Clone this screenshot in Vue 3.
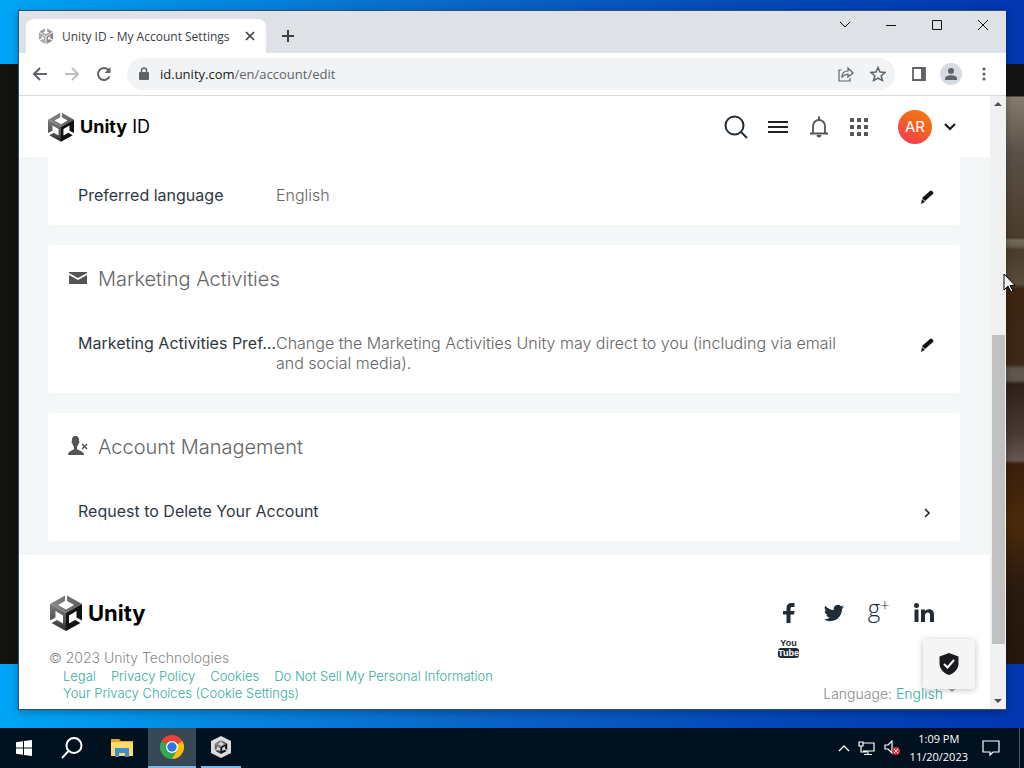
<script setup>
import { ref } from 'vue'

const address = ref('id.unity.com/en/account/edit')

const legalLinks = [
  { id: 'legal', name: 'Legal' },
  { id: 'privacy', name: 'Privacy Policy' },
  { id: 'cookies', name: 'Cookies' },
  { id: 'do-not-sell', name: 'Do Not Sell My Personal Information' },
  { id: 'choices', name: 'Your Privacy Choices (Cookie Settings)' }
]

const dots = [0, 7, 14]
</script>

<template>
  <!-- shared shapes -->
  <svg class="defs" width="0" height="0" aria-hidden="true">
    <defs>
      <linearGradient id="cube-left" x1="0" y1="0" x2="0" y2="1">
        <stop offset="0" stop-color="#7a7a7a" />
        <stop offset="0.6" stop-color="#555" />
        <stop offset="1" stop-color="#262626" />
      </linearGradient>
      <linearGradient id="cube-top" x1="0" y1="0" x2="1" y2="0">
        <stop offset="0" stop-color="#8a8a8a" />
        <stop offset="1" stop-color="#5c5c5c" />
      </linearGradient>
      <symbol id="cube" viewBox="0 0 64 72">
        <path fill="url(#cube-top)" d="M30 1v11L16 20l16 9 16-9-14-8V1l30 17-32 18L0 18z" />
        <path fill="url(#cube-left)" d="M0 18l32 18v36L3 56l11-6 12 7V41L11 32v13L0 51z" />
        <path d="M64 18L32 36v36l29-16-11-6-12 7V41l15-9v13l11 6z" />
      </symbol>
      <symbol id="cube-gray" viewBox="0 0 64 72">
        <path fill="#999" d="M27 2v13l-9 5 14 8 14-8-9-5V2l25 15-30 19L2 17z" />
        <path fill="#aaa" d="M0 20l30 18v34L4 57l12-7 7 4V43L13 36v10L0 53z" />
        <path fill="#8a8a8a" d="M64 20L34 38v34l26-15-12-7-7 4V43l10-7v10l13 7z" />
      </symbol>
      <symbol id="pencil" viewBox="0 0 14 14">
        <path d="M10 1q1-1 2 0l1 1q1 1 0 2L5 11 2 8zM2 9l3 3-4 2z" />
      </symbol>
    </defs>
  </svg>

  <div class="desktop">
    <div class="back-window left"></div>
    <div class="back-window right"></div>

    <div class="browser">
      <div class="tab-strip">
        <div class="tab">
          <svg class="favicon" width="16" height="16"><use href="#cube-gray" /></svg>
          <span class="tab-title">Unity ID - My Account Settings</span>
          <button aria-label="Close tab">
            <svg width="10" height="10" stroke="#3c4043" stroke-width="1.7"><path d="M1 1l8 8M9 1L1 9" /></svg>
          </button>
        </div>
        <button class="new-tab" aria-label="New tab">
          <svg width="14" height="14" stroke="#3c4043" stroke-width="2"><path d="M7 1v12M1 7h12" /></svg>
        </button>
        <div class="window-controls">
          <button aria-label="Search tabs"><svg width="12" height="12"><path d="M1 3l5 5 5-5" /></svg></button>
          <button aria-label="Minimize"><svg width="12" height="12"><path d="M1 6.500h10" /></svg></button>
          <button aria-label="Maximize"><svg width="12" height="12"><path d="M1.500 1.500h9v9h-9z" /></svg></button>
          <button aria-label="Close"><svg width="12" height="12"><path d="M1 1l10 10M11 1L1 11" /></svg></button>
        </div>
      </div>

      <div class="toolbar">
        <button aria-label="Back">
          <svg width="16" height="16" stroke="#5f6368" stroke-width="2"><path d="M15 8H2M8 2L2 8l6 6" /></svg>
        </button>
        <button aria-label="Forward">
          <svg width="16" height="16" stroke="#bcbec1" stroke-width="2"><path d="M1 8h13M8 2l6 6-6 6" /></svg>
        </button>
        <button aria-label="Reload">
          <svg width="16" height="16" stroke="#5f6368" stroke-width="2"><path d="M13.500 10.500A6 6 0 1 1 12.500 4" /><path d="M14.500 1v6h-6z" fill="#5f6368" stroke="none" /></svg>
        </button>
        <div class="omnibox">
          <svg width="10" height="14" class="lock">
            <rect x="0" y="5" width="10" height="8" rx="1" fill="#5f6368" />
            <path d="M2.500 5V3.500a2.500 2.500 0 0 1 5 0V5" stroke="#5f6368" stroke-width="1.500" />
          </svg>
          <label class="url">
            <span class="url-shown" aria-hidden="true"><b>id.unity.com</b>/en/account/edit</span>
            <input v-model="address" aria-label="Address" />
          </label>
          <button aria-label="Share">
            <svg width="16" height="16" stroke="#5f6368" stroke-width="1.200"><path d="M3.500 4H1v11h11v-3M4 11c0-4 2-6 6-6V2l5 5-5 4V8c-3 0-4 1-6 3z" /></svg>
          </button>
          <button aria-label="Bookmark">
            <svg width="16" height="16" stroke="#5f6368" stroke-width="1.500"><path d="M8 1.500l2 4.500 5 .5-3.800 3.200 1.200 4.800L8 12l-4.400 2.500 1.200-4.800L1 6.500 6 6z" /></svg>
          </button>
        </div>
        <button aria-label="Side panel">
          <svg width="16" height="16"><path d="M2 2h12v12H2z" stroke="#5f6368" stroke-width="1.800" /><path d="M10 2h4v12h-4z" fill="#5f6368" /></svg>
        </button>
        <button class="profile" aria-label="Profile">
          <svg width="14" height="14" fill="#5f6368"><circle cx="7" cy="4" r="3" /><path d="M1 13v-1.500C1 9 5 8.300 7 8.300s6 .7 6 3.200V13z" /></svg>
        </button>
        <button aria-label="Menu">
          <svg width="4" height="14" fill="#5f6368"><circle cx="2" cy="2" r="1.600" /><circle cx="2" cy="7" r="1.600" /><circle cx="2" cy="12" r="1.600" /></svg>
        </button>
      </div>

      <div class="viewport">
        <div class="page">
          <header>
            <a class="brand" href="#id">
              <svg width="26" height="30"><use href="#cube" /></svg>
              <span><b>Unity</b> ID</span>
            </a>
            <nav>
              <button aria-label="Search">
                <svg width="24" height="24" stroke="#222c37" stroke-width="2"><circle cx="10.500" cy="10.500" r="9" /><path d="M17 17l6 6" /></svg>
              </button>
              <button aria-label="Menu">
                <svg width="20" height="12" stroke="#222" stroke-width="2"><path d="M0 1h20M0 6h20M0 11h20" /></svg>
              </button>
              <button class="bell" aria-label="Notifications">
                <svg width="18" height="22" stroke="#555" stroke-width="1.800"><path d="M3 16.500V10a6 6 0 0 1 12 0v6.500M0 17.500h18" /><path d="M6.500 19h5q-.5 2.500-2.500 2.500T6.500 19zM8 1.500q0-1.500 1-1.500t1 1.500V4H8z" fill="#555" stroke="none" /></svg>
              </button>
              <button aria-label="Apps">
                <svg width="18" height="18" fill="#555">
                  <template v-for="y in dots" :key="y">
                    <rect v-for="x in dots" :key="x" :x="x" :y="y" width="4" height="4" rx="0.500" />
                  </template>
                </svg>
              </button>
              <button class="account" aria-label="Account">
                <span class="avatar">AR</span>
                <svg width="12" height="8" stroke="#111" stroke-width="2"><path d="M1 1l5 5 5-5" /></svg>
              </button>
            </nav>
          </header>

          <main>
            <section class="first">
              <div class="row">
                <span class="label">Preferred language</span>
                <span class="value">English</span>
                <button aria-label="Edit preferred language"><svg width="14" height="14"><use href="#pencil" /></svg></button>
              </div>
            </section>

            <section>
              <h2>
                <svg width="20" height="16" fill="#555"><path d="M1 1h18v1l-9 5-9-5zM1 4l9 5 9-5v9H1z" /></svg>
                Marketing Activities
              </h2>
              <div class="row tall">
                <span class="label">Marketing Activities Pref...</span>
                <span class="value">Change the Marketing Activities Unity may direct to you (including via email and social media).</span>
                <button aria-label="Edit marketing activities"><svg width="14" height="14"><use href="#pencil" /></svg></button>
              </div>
            </section>

            <section>
              <h2>
                <svg width="20" height="22" fill="#555"><path d="M7.500 0C10 0 11.500 2 11 5c.8.500.5 2-.4 2.600-.3 1.400-1 2.400-1.600 3V13c1 1.500 7 2 7 6H0c0-4 5-4.500 6-6v-2.400C5 10 4.700 9 4.400 7.600 3.500 7 3.300 5.500 4 5c-.5-3 1-5 3.500-5z" /><path d="M14 8l5 5M19 8l-5 5" stroke="#555" stroke-width="1.500" /></svg>
                Account Management
              </h2>
              <div class="row">
                <span class="label wide">Request to Delete Your Account</span>
                <button aria-label="Request to delete your account">
                  <svg width="14" height="10" stroke="#222" stroke-width="1.600"><path d="M5 1l4 4-4 4" /></svg>
                </button>
              </div>
            </section>
          </main>

          <footer>
            <div class="footer-top">
              <a class="footer-brand" href="#unity">
                <svg width="32" height="36"><use href="#cube" /></svg>
                <b>Unity</b>
              </a>
              <div class="social">
                <a href="#facebook" aria-label="Facebook">
                  <svg width="14" height="20" fill="#222c37"><path d="M12.500 0v4h-2C9 4 8.500 4.600 8.500 6v2h4L12 11.500H8.500V20h-4v-8.500H1V8h3.500V5C4.500 1.700 6.500 0 9.500 0z" /></svg>
                </a>
                <a href="#twitter" aria-label="Twitter">
                  <svg width="20" height="18" viewBox="0 2 24 20" fill="#222c37"><path d="M23.950 4.570a10 10 0 0 1-2.820.770 4.960 4.960 0 0 0 2.160-2.720c-.950.550-2 .950-3.130 1.180a4.920 4.920 0 0 0-8.380 4.480C7.690 8.100 4.070 6.130 1.640 3.160a4.920 4.920 0 0 0 1.520 6.570 4.900 4.900 0 0 1-2.230-.610v.060a4.920 4.920 0 0 0 3.950 4.830 5 5 0 0 1-2.210.080 4.940 4.940 0 0 0 4.600 3.420A9.870 9.870 0 0 1 0 19.540a13.990 13.990 0 0 0 7.550 2.210c9.050 0 14-7.500 14-13.980 0-.210 0-.420-.020-.630a9.940 9.940 0 0 0 2.420-2.570z" /></svg>
                </a>
                <a class="gplus" href="#google" aria-label="Google+">g<sup>+</sup></a>
                <a href="#linkedin" aria-label="LinkedIn">
                  <svg width="20" height="20" fill="#222c37"><circle cx="2.500" cy="2.500" r="2.500" /><path d="M.5 6.500h4V19h-4zM7 6.500h4v1.700c.7-1.200 2-2 4-2 3.700 0 5 2.200 5 5.800v7h-4v-6.500c0-1.600-.3-3-2.200-3S11 11 11 12.500V19H7z" /></svg>
                </a>
                <a class="youtube" href="#youtube" aria-label="YouTube">
                  <span>You</span><span class="tube">Tube</span>
                </a>
              </div>
            </div>
            <p>© 2023 Unity Technologies</p>
            <div class="footer-bottom">
              <div class="links">
                <a v-for="link in legalLinks" :key="link.id" :href="`#${link.id}`">{{ link.name }}</a>
              </div>
              <div class="language">
                Language: <a href="#language">English</a>
                <svg width="10" height="6" stroke="#999" stroke-width="1.500"><path d="M1 1l4 4 4-4" /></svg>
              </div>
            </div>
          </footer>
        </div>

        <div class="scrollbar">
          <svg width="8" height="4" fill="#505050"><path d="M0 4l4-4 4 4z" /></svg>
          <div class="track"><div class="thumb"></div></div>
          <svg width="8" height="4" fill="#505050"><path d="M0 0l4 4 4-4z" /></svg>
        </div>

        <button class="shield" aria-label="Privacy settings">
          <svg width="20" height="24"><path fill="#1b1b1f" d="M10 1l9.500 3.500V11c0 6-4 10-9.500 12C4.500 21 .5 17 .5 11V4.500z" /><path d="M5 12l3.500 3.500L15 8" stroke="#fff" stroke-width="2" /></svg>
        </button>
      </div>
    </div>

    <svg class="cursor" width="13" height="20"><path d="M1 1v16l4-4 3 6 2-1-3-5.500h5z" fill="#fff" stroke="#000" /></svg>

    <div class="taskbar">
      <button aria-label="Start">
        <svg width="16" height="16" fill="#fff"><path d="M0 2.300L7 1.200V7.500H0zM8 1l8-1v7.500H8zM0 8.500h7v6.300l-7-1zM8 8.500h8V16l-8-1z" /></svg>
      </button>
      <button aria-label="Search">
        <svg width="24" height="24" stroke="#fff" stroke-width="2"><circle cx="14" cy="9.500" r="7.500" /><path d="M8.500 15L2 22" /></svg>
      </button>
      <button class="explorer" aria-label="File Explorer">
        <svg width="22" height="20"><path fill="#e5a823" d="M0 1h8l2 2h12v4H0z" /><path fill="#ffd96a" d="M0 4h22v14H0z" /><path fill="#3f8fce" d="M4 10h14v9h-4v-4H8v4H4z" /></svg>
      </button>
      <button class="running active" aria-label="Chrome">
        <svg width="24" height="24" viewBox="0 0 24 24">
          <path fill="#ea4335" d="M12 12L1.600 6A12 12 0 0 1 22.400 6z" />
          <path fill="#fbbc05" d="M12 12l10.400-6A12 12 0 0 1 12 24z" />
          <path fill="#34a853" d="M12 12l5.200 3L12 24A12 12 0 0 1 1.600 6z" />
          <path fill="#ea4335" d="M12 6h10.400L17 8z" />
          <circle cx="12" cy="12" r="6" fill="#fff" /><circle cx="12" cy="12" r="4.700" fill="#2c76e8" />
        </svg>
      </button>
      <button class="running hub" aria-label="Unity Hub">
        <svg width="20" height="22"><path fill="#dcdcdc" d="M10 0l10 5v12l-10 5-10-5V5z" /><svg x="3" y="4" width="14" height="14"><use href="#cube" /></svg></svg>
      </button>
      <div class="tray">
        <svg width="12" height="8" stroke="#fff" stroke-width="1.300"><path d="M1 7l5-5 5 5" /></svg>
        <svg width="18" height="16" stroke="#fff" stroke-width="1.200"><path d="M5 3h11v8H5M1 2h4v4H1zM3 6v6h6M10 11v3M6 14.500h8" /></svg>
        <svg width="18" height="16"><path d="M1 5h3l4-4v12L4 9H1z" stroke="#fff" stroke-width="1.200" /><circle cx="12" cy="11" r="4" fill="#d9343c" /><path d="M10 9l4 4M14 9l-4 4" stroke="#fff" /></svg>
        <div class="clock"><span>1:09 PM</span><span>11/20/2023</span></div>
        <svg width="18" height="18" stroke="#fff" stroke-width="1.200"><path d="M1 2h16v11h-6l-3 3v-3H1z" /></svg>
      </div>
    </div>
  </div>
</template>

<style>
body {
  margin: 0;
}
</style>

<style scoped>
* {
  box-sizing: border-box;
}

svg {
  display: block;
  flex: none;
}

svg:not([fill]) {
  fill: none;
}

.defs {
  position: absolute;
}

use {
  fill: #111;
}

button {
  display: flex;
  align-items: center;
  justify-content: center;
  padding: 0;
  border: 0;
  background: none;
  font: inherit;
}

a {
  color: #36ada0;
  text-decoration: none;
}

.desktop {
  position: relative;
  height: 100vh;
  display: flex;
  flex-direction: column;
  overflow: hidden;
  background: linear-gradient(90deg, #00a6f6, #0a66c8 45%, #0348b8 75%, #0236b0);
  font-family: "Open Sans", "Noto Sans", sans-serif;
}

.back-window {
  position: absolute;
  top: 64px;
  bottom: 104px;
  width: 60px;
  background: #131412;
}

.back-window.left {
  left: 0;
}

.back-window.right {
  right: 0;
  background: linear-gradient(#141414 32px, #887c6e 33px, #5b5047 90px, #4b3b2c 174px, #756b5d 176px, #675d4d 182px, #4a3c2c 186px, #5a4c3a 220px, #3c2410 225px, #3c2818 300px, #60564c 305px, #60564c 316px, #30201c 320px, #493a32 370px, #655850 396px, #3a1f0c 400px, #4b2a0a 460px, #2b1a0f 520px, #24170e);
}

.browser {
  position: relative;
  flex: 1;
  min-height: 0;
  margin: 10px 18px 18px;
  display: flex;
  flex-direction: column;
  border: 1px solid #33506e;
  border-width: 1px 0 1px 1px;
  background: #fff;
  box-shadow: 0 2px 8px rgba(0, 0, 0, 0.3);
}

.tab-strip {
  display: flex;
  height: 42px;
  padding: 8px 0 0 7px;
  background: #dee1e6;
}

.tab {
  display: flex;
  align-items: center;
  width: 240px;
  padding: 0 11px 0 12px;
  border-radius: 8px 8px 0 0;
  background: #fff;
}

.tab-title {
  flex: 1;
  margin-left: 8px;
  font-size: 12px;
  color: #3c4043;
  white-space: nowrap;
}

.new-tab {
  width: 28px;
  height: 34px;
  margin-left: 8px;
}

.window-controls {
  display: flex;
  height: 12px;
  margin-left: auto;
}

.window-controls button {
  width: 46px;
}

.window-controls svg {
  stroke: #111;
}

.toolbar {
  display: flex;
  align-items: center;
  gap: 16px;
  height: 43px;
  padding: 0 20px 0 13px;
  border-bottom: 1px solid #d8dadd;
}

.omnibox {
  flex: 1;
  display: flex;
  align-items: center;
  gap: 16px;
  height: 32px;
  margin-left: -1px;
  padding: 0 9px 0 12px;
  border-radius: 16px;
  background: #f1f3f4;
}

.url {
  position: relative;
  flex: 1;
  margin-left: -5px;
  font-size: 13px;
  line-height: 20px;
  color: #5f6368;
}

.url b {
  font-weight: 400;
  color: #202124;
}

.url input {
  position: absolute;
  inset: 0;
  width: 100%;
  padding: 0;
  border: 0;
  background: none;
  font: inherit;
  color: transparent;
  outline: 0;
}

.profile {
  width: 22px;
  height: 22px;
  margin: 0 4px 0 -3px;
  border-radius: 50%;
  background: #d6dae3;
}

.viewport {
  position: relative;
  flex: 1;
  min-height: 0;
  display: flex;
  font-family: Inter, "Liberation Sans", sans-serif;
}

.page {
  flex: 1;
  overflow: hidden;
}

header {
  display: flex;
  align-items: center;
  justify-content: space-between;
  height: 61px;
  padding: 0 34px 0 29px;
}

.brand {
  display: flex;
  align-items: center;
  gap: 6px;
  font-size: 18px;
  color: #000;
}

nav {
  display: flex;
  align-items: center;
  gap: 20px;
}

.bell {
  width: 22px;
}

.account {
  gap: 12px;
  margin-left: 10px;
}

.avatar {
  width: 34px;
  height: 34px;
  border-radius: 50%;
  background: linear-gradient(30deg, #f5325b, #f4661f 60%, #f47b10);
  color: #fff;
  font-size: 15px;
  line-height: 34px;
}

main {
  display: flex;
  flex-direction: column;
  gap: 20px;
  padding: 0 30px 14px 29px;
  background: #f3f7f8;
}

section {
  background: #fff;
  border-radius: 2px;
}

h2 {
  display: flex;
  align-items: center;
  gap: 10px;
  height: 68px;
  margin: 0;
  padding-left: 20px;
  font-size: 20px;
  font-weight: 300;
  color: #666;
}

.row {
  display: flex;
  align-items: flex-start;
  padding: 20px 26px 16px 30px;
  font-size: 16px;
  font-weight: 300;
  line-height: 20px;
}

.row.tall {
  padding-bottom: 20px;
}

.first .row {
  padding-top: 28px;
}

.label {
  width: 198px;
  flex: none;
  white-space: nowrap;
  font-weight: 400;
  color: #2f3842;
}

.label.wide {
  width: auto;
}

.value {
  max-width: 580px;
  color: #666;
}

.row button {
  height: 24px;
  margin-left: auto;
}

footer {
  padding: 38px 33px 8px 30px;
  font-weight: 300;
}

.footer-top {
  display: flex;
  justify-content: space-between;
}

.footer-brand {
  display: flex;
  align-items: center;
  gap: 6px;
  height: 40px;
  padding-left: 1px;
  font-size: 22px;
  color: #000;
}

.brand b,
.footer-brand b {
  font-weight: 700;
}

.social {
  display: flex;
  flex-wrap: wrap;
  width: 180px;
  margin: 2px 11px 0 0;
}

.social a {
  display: flex;
  align-items: center;
  justify-content: center;
  width: 45px;
  height: 35px;
  color: #222c37;
}

.social .gplus {
  align-items: flex-start;
  font-family: "Open Sans", sans-serif;
  font-size: 24px;
  line-height: 26px;
}

.gplus sup {
  font-size: 16px;
  line-height: 20px;
}

.social .youtube {
  flex-direction: column;
  font-family: "Liberation Sans Narrow", "Liberation Sans", sans-serif;
  font-size: 9px;
  font-weight: 700;
  line-height: 10px;
}

.tube {
  border-radius: 3px;
  background: #222c37;
  color: #fff;
}

footer p {
  margin: -16px 0 1px;
  font-size: 14px;
  line-height: 18px;
  color: #888;
}

.footer-bottom {
  display: flex;
  align-items: flex-end;
  justify-content: space-between;
}

.links {
  display: flex;
  flex-wrap: wrap;
  column-gap: 15px;
  width: 460px;
  padding-left: 14px;
  font-size: 13px;
  line-height: 17px;
}

.language {
  display: flex;
  gap: 4px;
  font-size: 14px;
  line-height: 16px;
  color: #888;
}

.scrollbar {
  display: flex;
  flex-direction: column;
  align-items: center;
  gap: 6px;
  width: 16px;
  padding: 6px 0;
  background: #f1f1f1;
}

.track {
  flex: 1;
  display: flex;
  align-items: flex-end;
  width: 13px;
  padding-bottom: 49px;
}

.thumb {
  width: 100%;
  height: 58%;
  background: #c1c1c1;
}

.shield {
  position: absolute;
  right: 31px;
  bottom: 20px;
  width: 52px;
  height: 50px;
  border-radius: 4px;
  background: #f5f5f5;
  box-shadow: 0 1px 6px rgba(0, 0, 0, 0.25);
}

.cursor {
  position: absolute;
  top: 273px;
  right: 8px;
}

.taskbar {
  position: relative;
  display: flex;
  height: 40px;
  padding-right: 4px;
  background: #02111f;
  color: #fff;
}

.taskbar > button {
  width: 48px;
}

.taskbar > .explorer {
  width: 52px;
}

.taskbar > .hub {
  width: 40px;
  margin-left: 5px;
}

.running {
  border-bottom: 2px solid #76b9ed;
}

.active {
  background: #384754;
}

.tray {
  display: flex;
  align-items: center;
  gap: 8px;
  margin-left: auto;
  padding-right: 19px;
  border-right: 1px solid #4a5560;
}

.clock {
  display: flex;
  flex-direction: column;
  align-items: center;
  margin-right: 6px;
  font-size: 11px;
  line-height: 18px;
}
</style>
